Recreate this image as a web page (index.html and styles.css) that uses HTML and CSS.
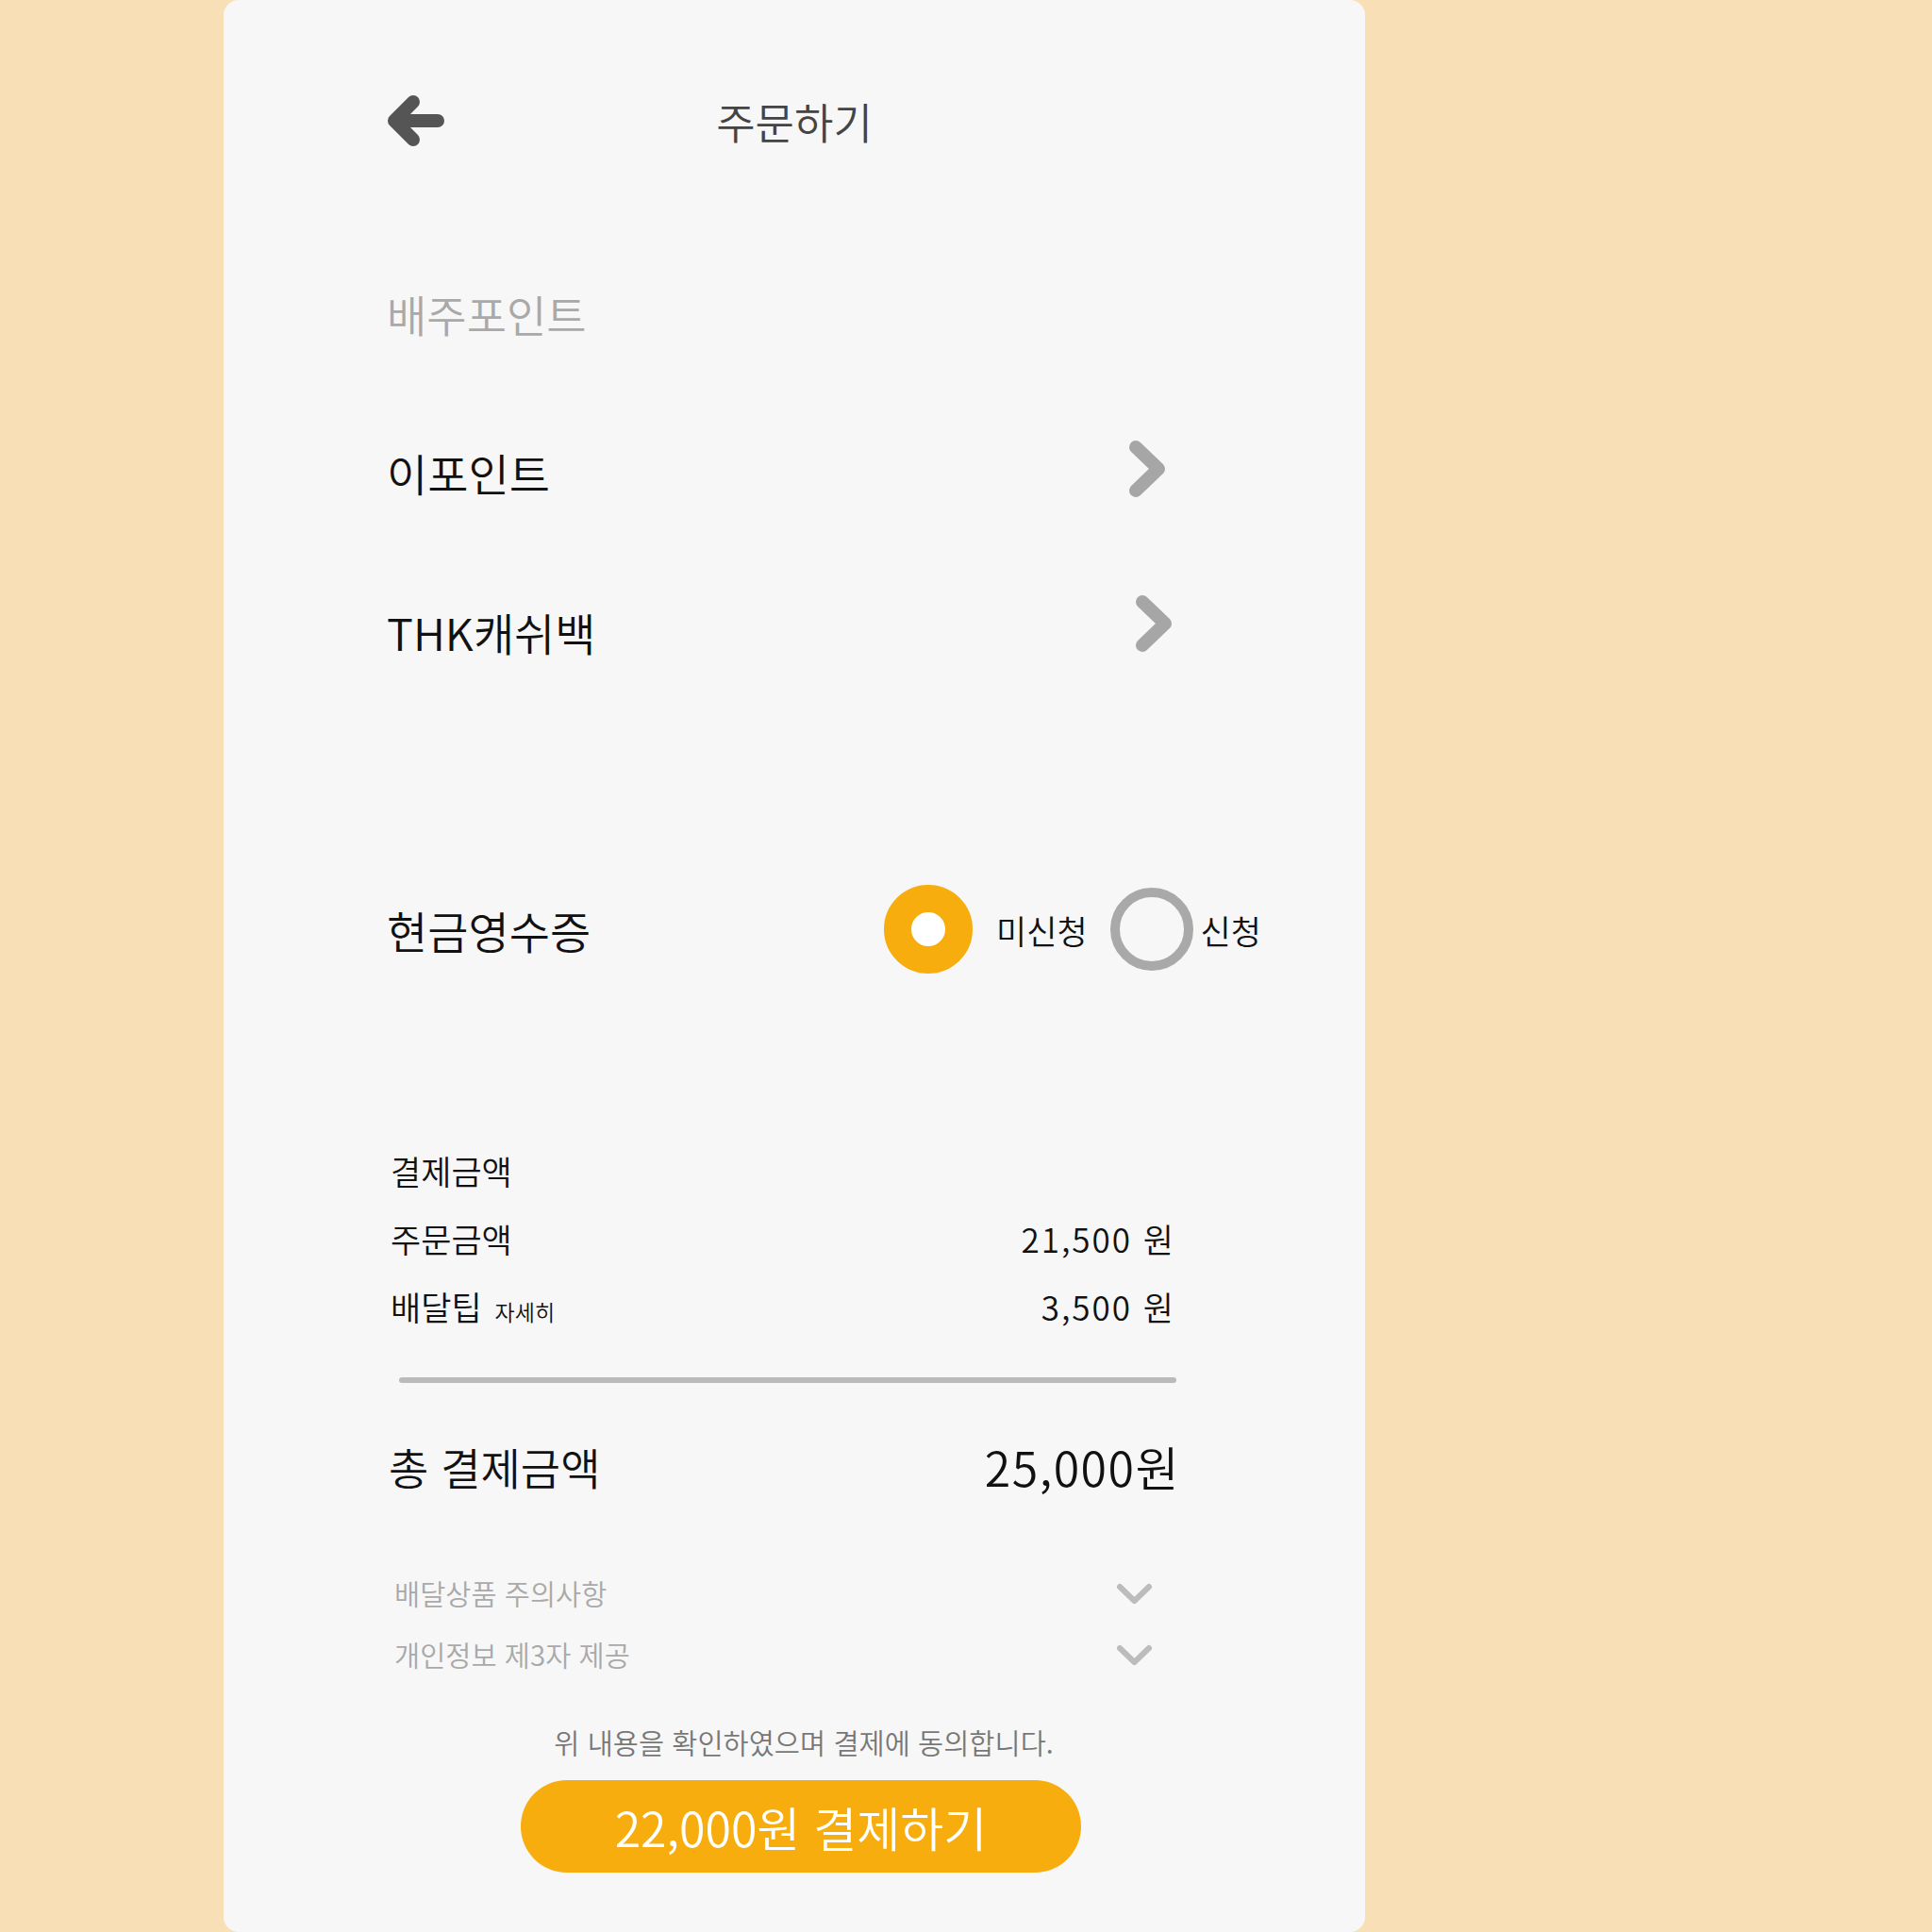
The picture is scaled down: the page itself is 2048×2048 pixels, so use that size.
FILE: index.html
```html
<!DOCTYPE html>
<html lang="ko">
<head>
<meta charset="utf-8">
<title>주문하기</title>
<link rel="stylesheet" href="styles.css">
</head>
<body>
<div class="card">
  <header class="header">
    <svg class="back" width="60" height="54" viewBox="0 0 60 54" aria-hidden="true">
      <polyline points="27,7 7,27 27,47" fill="none" stroke="#555" stroke-width="14" stroke-linecap="round" stroke-linejoin="round"/>
      <line x1="8" y1="27" x2="53" y2="27" stroke="#555" stroke-width="14" stroke-linecap="round"/>
    </svg>
    <h1 class="title">주문하기</h1>
    <span></span>
  </header>

  <div class="section-label">배주포인트</div>

  <div class="link-row first">
    <span class="link-text">이포인트</span>
    <svg class="chev chev-a" width="42" height="62" viewBox="0 0 42 62" aria-hidden="true">
      <polyline points="9,8 33,31 9,54" fill="none" stroke="#a6a6a6" stroke-width="14" stroke-linecap="round" stroke-linejoin="round"/>
    </svg>
  </div>

  <div class="link-row second">
    <span class="link-text shifted">THK캐쉬백</span>
    <svg class="chev chev-b" width="42" height="62" viewBox="0 0 42 62" aria-hidden="true">
      <polyline points="9,8 33,31 9,54" fill="none" stroke="#a6a6a6" stroke-width="14" stroke-linecap="round" stroke-linejoin="round"/>
    </svg>
  </div>

  <div class="receipt-row">
    <span class="link-text">현금영수증</span>
    <div class="radio-group">
      <span class="radio on"></span>
      <span class="radio-label first-label">미신청</span>
      <span class="radio off"></span>
      <span class="radio-label last-label">신청</span>
    </div>
  </div>

  <div class="pay-block">
    <div class="pay-row"><span>결제금액</span></div>
    <div class="pay-row gap"><span>주문금액</span><span class="amount">21,500 원</span></div>
    <div class="pay-row gap"><span class="tip"><span>배달팁</span><span class="detail">자세히</span></span><span class="amount">3,500 원</span></div>
  </div>

  <div class="divider"></div>

  <div class="total-row">
    <span class="total-label">총 결제금액</span>
    <span class="total-amount">25,000원</span>
  </div>

  <div class="notice first-notice">
    <span>배달상품 주의사항</span>
    <svg width="41" height="25" viewBox="0 0 41 25" aria-hidden="true">
      <polyline points="5,5 20.5,20 36,5" fill="none" stroke="#bcbcbc" stroke-width="6" stroke-linecap="round" stroke-linejoin="round"/>
    </svg>
  </div>
  <div class="notice second-notice">
    <span>개인정보 제3자 제공</span>
    <svg width="41" height="25" viewBox="0 0 41 25" aria-hidden="true">
      <polyline points="5,5 20.5,20 36,5" fill="none" stroke="#bcbcbc" stroke-width="6" stroke-linecap="round" stroke-linejoin="round"/>
    </svg>
  </div>

  <footer class="footer">
    <p class="agree">위 내용을 확인하였으며 결제에 동의합니다.</p>
    <button class="pay-btn" type="button">22,000원 결제하기</button>
  </footer>
</div>
</body>
</html>
```

FILE: styles.css
```css
html, body {
  margin: 0;
  padding: 0;
}
body {
  background: #f8dfb5;
  width: 2048px;
  height: 2048px;
  overflow: hidden;
  font-family: "Noto Sans CJK KR", "Noto Sans", sans-serif;
  font-weight: 350;
  color: #111;
}
.card {
  margin-left: 237px;
  width: 1210px;
  height: 2048px;
  box-sizing: border-box;
  background: #f7f7f7;
  border-radius: 16px;
  padding: 80px 201px 0 173px;
}

/* header */
.header {
  display: grid;
  grid-template-columns: 1fr auto 1fr;
  align-items: center;
  height: 96px;
  margin-right: -28px;
}
.back {
  display: block;
  margin-left: 1px;
}
.title {
  margin: 0;
  font-size: 45px;
  font-weight: 350;
  line-height: 1;
  color: #444;
}

.section-label {
  margin-top: 126px;
  height: 60px;
  display: flex;
  align-items: center;
  font-size: 46px;
  line-height: 1;
  color: #a9a9a9;
}

/* link rows */
.link-row {
  display: flex;
  justify-content: space-between;
  align-items: center;
  height: 80px;
}
.link-row.first { margin-top: 98px; }
.link-row.second { margin-top: 86px; }
.link-text {
  font-size: 47px;
  line-height: 1;
  color: #111;
}
.link-text.shifted { margin-top: 6px; }
.chev { display: block; }
.chev-a { margin-right: 9px; margin-bottom: 6px; }
.chev-b { margin-right: 2px; margin-bottom: 10px; }

/* receipt */
.receipt-row {
  margin-top: 232px;
  margin-right: -91px;
  height: 94px;
  display: flex;
  align-items: center;
  justify-content: space-between;
}
.radio-group {
  display: flex;
  align-items: center;
}
.radio {
  display: block;
  box-sizing: border-box;
  border-radius: 50%;
}
.radio.on {
  width: 94px;
  height: 94px;
  border: 29px solid #f6ad0d;
  background: #fff;
}
.radio.off {
  width: 88px;
  height: 88px;
  border: 10px solid #a9a9a9;
  margin-left: 24px;
}
.radio-label {
  font-size: 35px;
  line-height: 1;
  color: #111;
}
.first-label { margin-left: 25px; }
.last-label { margin-left: 8px; }

/* payment */
.pay-block {
  margin-top: 183px;
  padding: 0 5px 0 4px;
}
.pay-row {
  height: 50px;
  display: flex;
  justify-content: space-between;
  align-items: center;
  font-size: 35px;
  line-height: 1;
  color: #111;
}
.pay-row.gap { margin-top: 22px; }
.amount {
  font-size: 35px;
  letter-spacing: 2px;
  margin-right: -5px;
}
.tip {
  display: flex;
  align-items: baseline;
}
.detail {
  font-size: 23px;
  margin-left: 14px;
}

.divider {
  margin-top: 51px;
  margin-left: 13px;
  margin-right: -1px;
  height: 6px;
  border-radius: 3px;
  background: #bababa;
}

.total-row {
  margin-top: 58px;
  height: 60px;
  display: flex;
  justify-content: space-between;
  align-items: center;
  line-height: 1;
}
.total-label {
  font-size: 46px;
  margin-left: 2px;
}
.total-amount {
  font-size: 50px;
  letter-spacing: 1.5px;
  margin-right: -5px;
}

.notice {
  height: 40px;
  display: flex;
  justify-content: space-between;
  align-items: center;
  padding-left: 8px;
  padding-right: 23px;
  font-size: 29.5px;
  line-height: 1;
  color: #a9a9a9;
}
.notice svg { display: block; }
.first-notice { margin-top: 85px; }
.second-notice { margin-top: 25px; }

.footer {
  margin-top: 53px;
  margin-right: -42px;
  display: flex;
  flex-direction: column;
  align-items: center;
}
.agree {
  margin: 0;
  padding-left: 6px;
  height: 40px;
  display: flex;
  align-items: center;
  font-size: 29.5px;
  line-height: 1;
  color: #777;
}
.pay-btn {
  margin-top: 20px;
  width: 594px;
  height: 98px;
  border: none;
  border-radius: 49px;
  background: #f6ad0d;
  color: #fff;
  font-family: "Noto Sans CJK KR", "Noto Sans", sans-serif;
  font-weight: 350;
  font-size: 50px;
  line-height: 1;
  padding: 0;
}
```
